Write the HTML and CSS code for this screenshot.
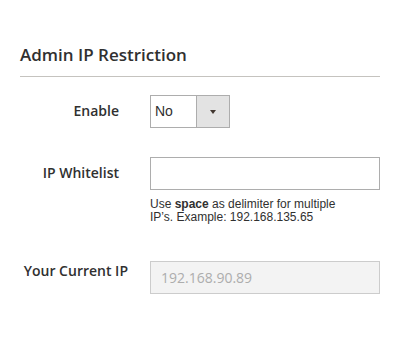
FILE: index.html
```html
<!DOCTYPE html>
<html lang="en">
<head>
    <meta charset="UTF-8">
    <meta name="viewport" content="width=device-width, initial-scale=1.0">
    <link rel="stylesheet" href="styles.css">
    <title>Admin IP Restriction</title>
</head>
<body>
    <section class="fieldset">

        <h2 class="legend">Admin IP Restriction</h2>

        <div class="field field-enable">
            <label class="label" for="enable">Enable</label>
            <div class="control">
                <div class="select">
                    <span class="select-value">No</span>
                    <span class="select-arrow"></span>
                </div>
            </div>
        </div>

        <div class="field field-whitelist">
            <label class="label" for="whitelist">IP Whitelist</label>
            <div class="control">
                <input class="input" type="text" id="whitelist" name="whitelist">
                <p class="note">Use <b>space</b> as delimiter for multiple IP’s. Example: 192.168.135.65</p>
            </div>
        </div>

        <div class="field field-current">
            <label class="label" for="current">Your Current IP</label>
            <div class="control">
                <input class="input input-disabled" type="text" id="current" value="192.168.90.89" disabled>
            </div>
        </div>

    </section>
</body>
</html>
```

FILE: styles.css
```css
* {
    box-sizing: border-box;
}

html, body {
    margin: 0;
    padding: 0;

    background-color: #FFFFFF;

    font-family: "Open Sans", sans-serif;
    color: #303030;
}

.fieldset {
    width: 360px;

    margin-left: 20px;
    padding-top: 45px;
}

.legend {
    margin: 0;
    padding-bottom: 11px;

    font-size: 17px;
    font-weight: 600;
    line-height: 20px;

    border-bottom: 1px solid #C5C3BF;
}

.field {
    display: flex;
    align-items: flex-start;
}

.field-enable {
    margin-top: 18px;
}

.field-whitelist {
    margin-top: 29px;
}

.field-current {
    margin-top: 37px;
}

.label {
    width: 99px;
    flex-shrink: 0;

    padding-top: 6px;
    margin-right: 31px;

    text-align: right;

    font-size: 14px;
    font-weight: 600;
    line-height: 20px;
}

.field-current .label {
    width: 108px;
    margin-right: 22px;
    padding-top: 0;
}

.control {
    width: 230px;
}

/*

    SELECT

*/

.select {
    display: flex;

    width: 80px;
    height: 33px;

    border: 1px solid #ADADAD;
}

.select-value {
    flex: 1;

    padding-left: 4px;

    font-family: "Liberation Sans", Arial, sans-serif;
    font-size: 14px;
    line-height: 31px;
    color: #303030;
}

.select-arrow {
    width: 33px;
    position: relative;

    border-left: 1px solid #ADADAD;

    background-color: #E3E3E3;
}

.select-arrow::after {
    content: "";

    position: absolute;
    left: 13px;
    top: 14px;

    border-left: 3.5px solid transparent;
    border-right: 3.5px solid transparent;
    border-top: 4px solid #41362F;
}

/*

    INPUTS

*/

.input {
    display: block;

    width: 230px;
    height: 33px;

    margin: 0;
    padding: 0 10px;

    border: 1px solid #ADADAD;
    border-radius: 0;

    background-color: #FFFFFF;

    font-family: "Open Sans", sans-serif;
    font-size: 14px;
    color: #303030;
}

.input-disabled {
    border-color: #CCCCCC;

    background-color: #F3F3F3;

    color: #ADADAD;
    -webkit-text-fill-color: #ADADAD;
    opacity: 1;
}

.note {
    width: 195px;

    margin: 8px 0 0 0;

    font-family: "Liberation Sans", Arial, sans-serif;
    font-size: 12px;
    line-height: 13px;
    color: #303030;
}
```
